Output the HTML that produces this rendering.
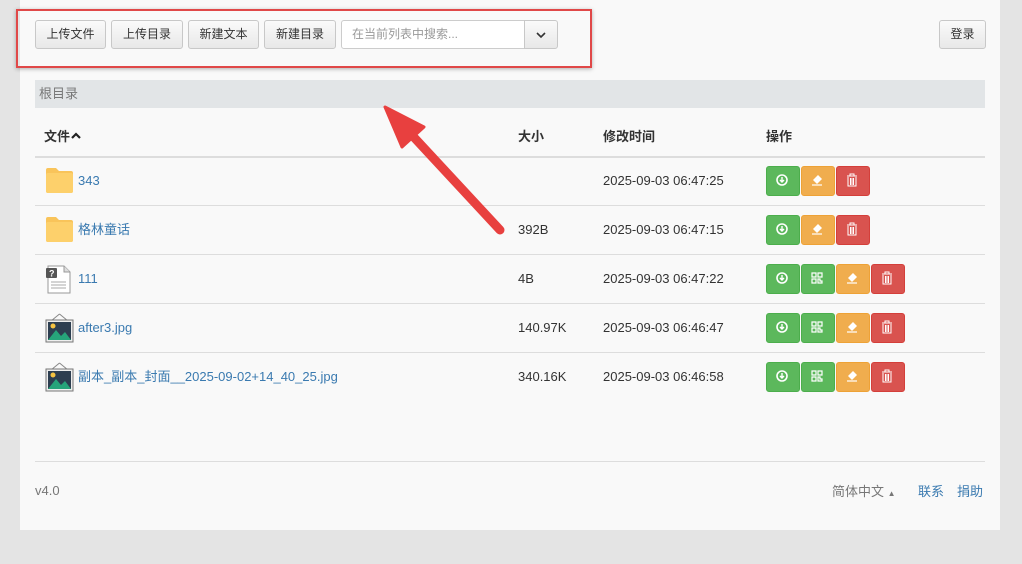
<!DOCTYPE html><html><head><meta charset="utf-8"><style>
body{margin:0;width:1022px;height:564px;background:#e4e4e4;font-family:"Liberation Sans","Noto Sans CJK SC",sans-serif;font-size:13px;color:#333;position:relative;overflow:hidden}
.panel{position:absolute;left:20px;top:0;width:980px;height:530px;background:#f9f9f9}
.btn{position:absolute;top:20px;height:27px;border:1px solid #c8c8c8;border-radius:3px;background:linear-gradient(#fafafa,#e8e8e8);font-size:12px;line-height:27px;text-align:center;color:#333;box-sizing:content-box}
.abs{position:absolute;line-height:16px}
.line{position:absolute;left:35px;width:950px;height:1px;background:#ddd}
.name{position:absolute;left:78px;color:#3a7ab0;font-size:13px;line-height:16px}
.sz{position:absolute;left:518px;line-height:16px}
.tm{position:absolute;left:603px;line-height:16px}
.ab{position:absolute;width:32px;height:28px;border-radius:3px;box-sizing:border-box}
.g{background:#5cb85c;border:1px solid #4cae4c}.o{background:#f0ad4e;border:1px solid #eea236}.r{background:#d9534f;border:1px solid #d43f3a}
</style></head><body>
<div class="panel"></div>
<div class="btn" style="left:35px;width:69px">上传文件</div>
<div class="btn" style="left:111px;width:70px">上传目录</div>
<div class="btn" style="left:188px;width:69px">新建文本</div>
<div class="btn" style="left:264px;width:70px">新建目录</div>
<div class="abs" style="left:341px;top:20px;height:27px;border:1px solid #ccc;border-radius:3px 0 0 3px;background:#fff;color:#999;font-size:12px;line-height:27px;padding-left:10px;box-sizing:content-box;width:173px">在当前列表中搜索...</div>
<div class="btn" style="left:524px;width:32px;border-radius:0 3px 3px 0"><svg width="12" height="10" viewBox="0 0 12 10" style="margin-top:9px"><path d="M2 3l4 4 4-4" stroke="#333" stroke-width="1.6" fill="none"/></svg></div>
<div class="btn" style="left:939px;width:45px">登录</div>
<div class="abs" style="left:16px;top:9px;width:572px;height:55px;border:2px solid #e04848;box-shadow:0 1px 4px rgba(0,0,0,.3)"></div>
<div class="abs" style="left:35px;top:80px;width:950px;height:28px;background:#e2e5e7;color:#777;line-height:28px;padding-left:4px;box-sizing:border-box">根目录</div>
<div class="abs" style="left:44px;top:129px;font-weight:bold">文件<svg width="12" height="10" viewBox="0 0 12 10"><path d="M2 7l4-4 4 4" stroke="#222" stroke-width="2.2" fill="none"/></svg></div>
<div class="abs" style="left:518px;top:129px;font-weight:bold">大小</div>
<div class="abs" style="left:603px;top:129px;font-weight:bold">修改时间</div>
<div class="abs" style="left:766px;top:129px;font-weight:bold">操作</div>
<div class="line" style="top:156px;height:2px"></div>
<div class="line" style="top:205px"></div><div class="line" style="top:254px"></div><div class="line" style="top:303px"></div><div class="line" style="top:352px"></div>
<div class="line" style="top:461px"></div>
<svg class="abs" style="left:45px;top:167px" width="29" height="27" viewBox="0 0 29 27"><path d="M1 3q0-2 2-2h8l3 3h12q2 0 2 2v18q0 2-2 2H3q-2 0-2-2z" fill="#f9c45a"/><rect x="1" y="6" width="27" height="20" rx="2" fill="#fdd06b"/></svg>
<svg class="abs" style="left:45px;top:216px" width="29" height="27" viewBox="0 0 29 27"><path d="M1 3q0-2 2-2h8l3 3h12q2 0 2 2v18q0 2-2 2H3q-2 0-2-2z" fill="#f9c45a"/><rect x="1" y="6" width="27" height="20" rx="2" fill="#fdd06b"/></svg>
<svg class="abs" style="left:46px;top:265px" width="26" height="29" viewBox="0 0 26 29"><path d="M2 1h16l6 6v21H2z" fill="#fff" stroke="#999"/><path d="M18 1v6h6" fill="#ddd" stroke="#999"/><rect x="0" y="3" width="11" height="10" rx="1" fill="#555"/><text x="3" y="11.5" font-size="9" fill="#fff" font-weight="bold" font-family="Liberation Sans">?</text><path d="M5 17h15M5 20h15M5 23h15" stroke="#aaa"/></svg>
<svg class="abs" style="left:45px;top:313px" width="29" height="30" viewBox="0 0 29 30"><path d="M14.5 1L6 8M14.5 1L23 8" stroke="#888"/><rect x="1" y="7" width="27" height="22" fill="#eee" stroke="#777"/><rect x="3" y="9" width="23" height="18" fill="#2d3e50"/><circle cx="8" cy="13" r="2.5" fill="#f5c342"/><path d="M3 27l8-10 5 6 4-4 6 8z" fill="#26a47a"/></svg>
<svg class="abs" style="left:45px;top:362px" width="29" height="30" viewBox="0 0 29 30"><path d="M14.5 1L6 8M14.5 1L23 8" stroke="#888"/><rect x="1" y="7" width="27" height="22" fill="#eee" stroke="#777"/><rect x="3" y="9" width="23" height="18" fill="#2d3e50"/><circle cx="8" cy="13" r="2.5" fill="#f5c342"/><path d="M3 27l8-10 5 6 4-4 6 8z" fill="#26a47a"/></svg>
<div class="name" style="top:173px">343</div><div class="tm" style="top:173px">2025-09-03 06:47:25</div>
<div class="name" style="top:222px">格林童话</div><div class="sz" style="top:222px">392B</div><div class="tm" style="top:222px">2025-09-03 06:47:15</div>
<div class="name" style="top:271px">111</div><div class="sz" style="top:271px">4B</div><div class="tm" style="top:271px">2025-09-03 06:47:22</div>
<div class="name" style="top:320px">after3.jpg</div><div class="sz" style="top:320px">140.97K</div><div class="tm" style="top:320px">2025-09-03 06:46:47</div>
<div class="name" style="top:369px">副本_副本_封面__2025-09-02+14_40_25.jpg</div><div class="sz" style="top:369px">340.16K</div><div class="tm" style="top:369px">2025-09-03 06:46:58</div>
<div id="acts"></div>
<script>
var rows=[[166,0],[215,0],[264,1],[313,1],[362,1]],h='';
var dl='<svg width="30" height="26" viewBox="0 0 30 26"><circle cx="15" cy="13" r="5" fill="none" stroke="#fff" stroke-width="1.6"/><path d="M15 10v5M13 13l2 2 2-2" stroke="#fff" stroke-width="1.4" fill="none"/></svg>';
var qr='<svg width="30" height="26" viewBox="0 0 30 26"><path d="M10 8h4v4h-4zM16 8h4v4h-4zM10 14h4v4h-4zM16 14h2v2h2v2h-4z" fill="none" stroke="#fff" stroke-width="1.2"/></svg>';
var er='<svg width="30" height="26" viewBox="0 0 30 26"><path d="M11 13l5-5 4 4-5 5z" fill="#fff"/><path d="M10 18h10" stroke="#fff" stroke-width="1.2"/></svg>';
var tr='<svg width="30" height="26" viewBox="0 0 30 26"><path d="M10 9h10M13 9V7h4v2M11 10v9h8v-9M13.5 11v7M15 11v7M16.5 11v7" stroke="#fff" stroke-width="1" fill="none"/></svg>';
rows.forEach(function(r){var x=766,t=r[0];var list=r[1]?[['g',dl],['g',qr],['o',er],['r',tr]]:[['g',dl],['o',er],['r',tr]];list.forEach(function(b){h+='<div class="ab '+b[0]+'" style="left:'+x+'px;top:'+t+'px;width:34px;height:30px">'+b[1]+'</div>';x+=35;});});
document.getElementById('acts').innerHTML=h;
</script>
<div class="abs" style="left:35px;top:483px;color:#777">v4.0</div>
<div class="abs" style="left:832px;top:484px;color:#777">简体中文 <span style="font-size:8px">▲</span></div>
<div class="abs" style="left:918px;top:484px;color:#3a7ab0">联系</div>
<div class="abs" style="left:957px;top:484px;color:#3a7ab0">捐助</div>
<svg class="abs" style="left:380px;top:100px" width="130" height="140" viewBox="0 0 130 140"><path d="M120 130L30 33" stroke="#e8403f" stroke-width="9" stroke-linecap="round"/><path d="M5 7L44 27 22 47z" fill="#e8403f" stroke="#e8403f" stroke-width="3" stroke-linejoin="round"/></svg>
</body></html>
